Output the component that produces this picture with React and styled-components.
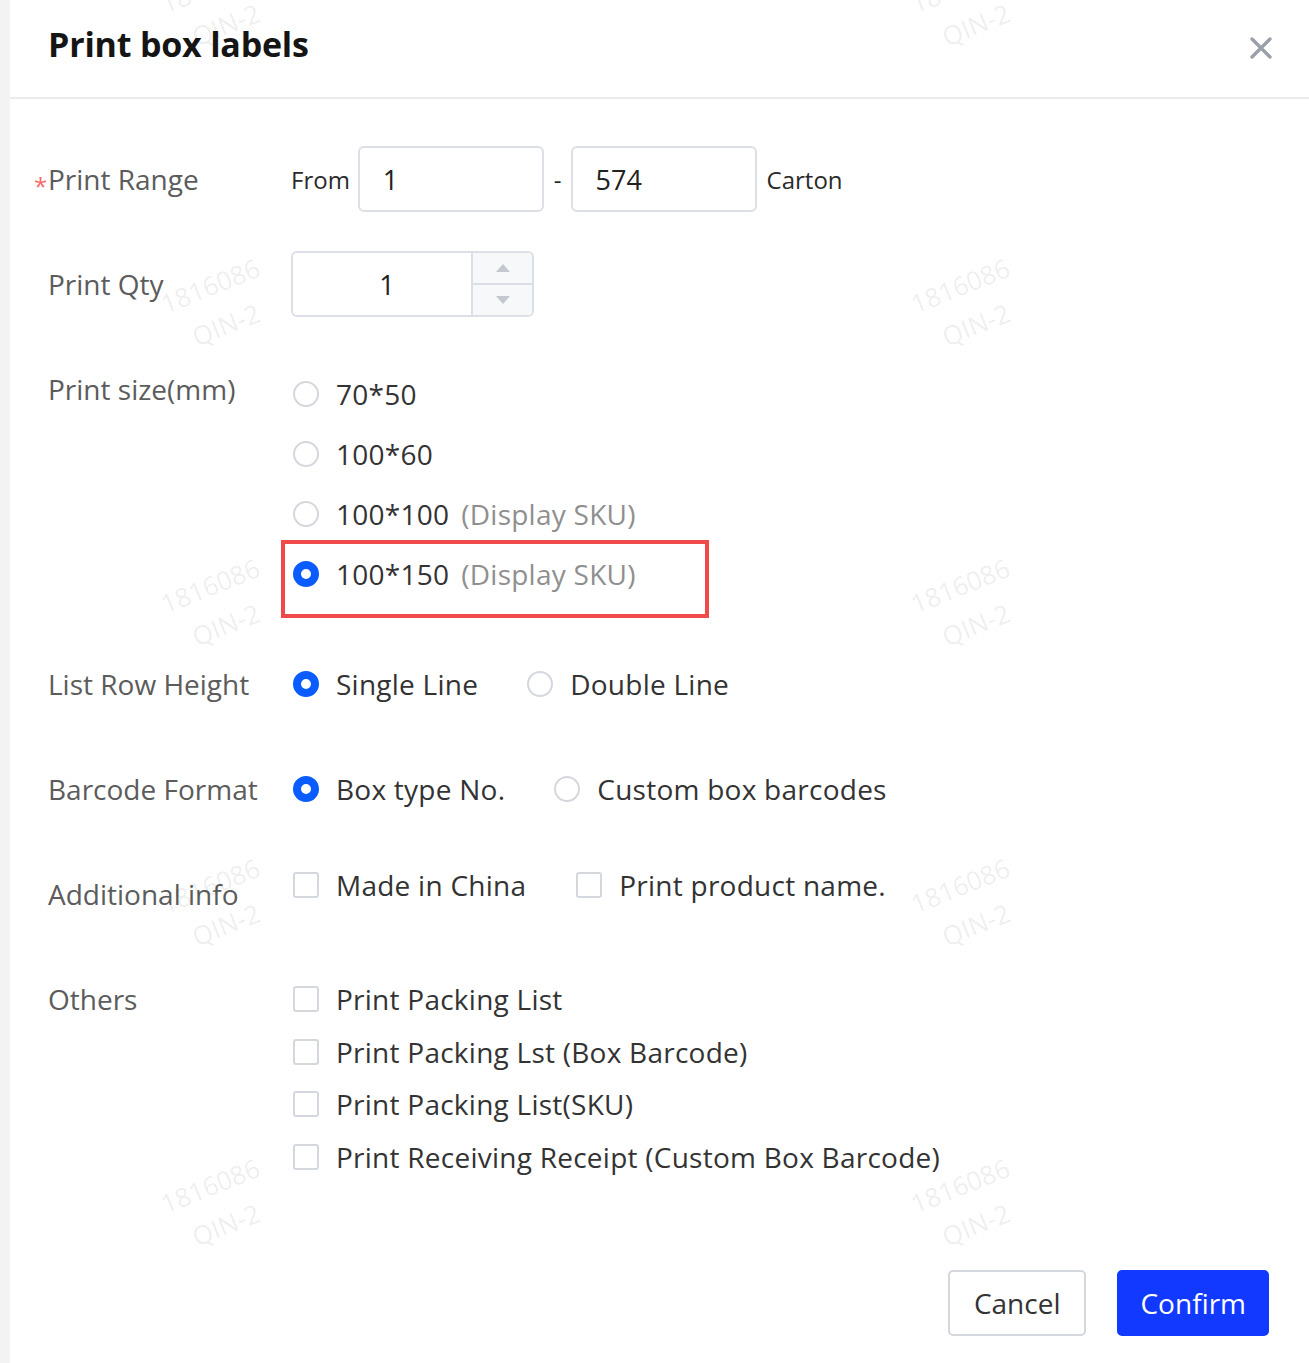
import React from 'react';
import styled, { createGlobalStyle } from 'styled-components';

const GlobalStyle = createGlobalStyle`
  html, body {
    margin: 0;
    padding: 0;
    background: #f3f3f3;
  }
  * {
    box-sizing: border-box;
  }
`;

const Dialog = styled.div`
  position: relative;
  margin-left: 10px;
  min-height: 1363px;
  background: #ffffff;
  font-family: "Open Sans", "Noto Sans", "Liberation Sans", sans-serif;
  overflow: hidden;
`;

const Header = styled.div`
  height: 99px;
  display: flex;
  align-items: center;
  justify-content: space-between;
  padding: 0 36px 0 38px;
  border-bottom: 2px solid #ebebeb;
`;

const Title = styled.h2`
  margin: 0 0 10px;
  font-size: 34px;
  font-weight: 700;
  letter-spacing: -0.2px;
  color: #151515;
`;

const CloseButton = styled.button`
  border: none;
  background: none;
  padding: 0;
  margin-bottom: 2px;
  width: 24px;
  height: 24px;
  cursor: pointer;
  display: flex;
`;

const Body = styled.div`
  padding: 47px 0 0;
`;

const FormItem = styled.div`
  display: flex;
  align-items: ${(p) => p.$align || 'center'};
  min-height: 66px;
  margin-bottom: ${(p) => p.$gap || 39}px;
`;

const Label = styled.div`
  flex: 0 0 281px;
  height: 66px;
  padding-left: 38px;
  display: flex;
  align-items: center;
  align-self: flex-start;
  font-size: 28px;
  color: #5c5c5c;
  white-space: nowrap;
`;

const Star = styled.span`
  color: #f56c6c;
  font-size: 24px;
  line-height: 1;
  margin: 14px 0 0 -14px;
  width: 14px;
`;

const Control = styled.div`
  display: flex;
  flex-wrap: ${(p) => (p.$column ? 'nowrap' : 'wrap')};
  flex-direction: ${(p) => (p.$column ? 'column' : 'row')};
  align-items: ${(p) => (p.$column ? 'flex-start' : 'center')};
  align-self: ${(p) => p.$self || 'auto'};
  padding-top: ${(p) => p.$pt || 0}px;
`;

const SmallText = styled.span`
  font-size: 24px;
  color: #2a2a2a;
  margin: ${(p) => p.$m || '0'};
`;

const TextInput = styled.div`
  width: 186px;
  height: 66px;
  border: 2px solid #dcdfe6;
  border-radius: 6px;
  padding-left: 23px;
  display: flex;
  align-items: center;
  font-size: 27px;
  color: #222;
`;

const NumberBox = styled.div`
  width: 243px;
  height: 66px;
  border: 2px solid #dcdfe6;
  border-radius: 6px;
  display: flex;
  overflow: hidden;
`;

const NumberValue = styled.div`
  flex: 1;
  display: flex;
  align-items: center;
  justify-content: center;
  padding-left: 10px;
  font-size: 27px;
  color: #222;
`;

const Stepper = styled.div`
  width: 61px;
  border-left: 2px solid #dcdfe6;
  background: #f7f8fa;
  display: flex;
  flex-direction: column;
`;

const StepButton = styled.div`
  flex: 1;
  display: flex;
  align-items: center;
  justify-content: center;
  border-top: ${(p) => (p.$down ? '2px solid #dcdfe6' : 'none')};
`;

const Option = styled.label`
  position: relative;
  display: flex;
  align-items: center;
  height: ${(p) => p.$h || 60}px;
  margin-right: ${(p) => p.$mr || 0}px;
  font-size: 28px;
  letter-spacing: 0.25px;
  color: #333;
  white-space: nowrap;
  cursor: pointer;
`;

const Radio = styled.span`
  width: 26px;
  height: 26px;
  border-radius: 50%;
  margin-left: 2px;
  margin-right: 17px;
  flex-shrink: 0;
  border: ${(p) => (p.$checked ? '8px solid #0a5cff' : '2px solid #d4d7dd')};
  background: #fff;
`;

const Checkbox = styled.span`
  width: 26px;
  height: 26px;
  border-radius: 3px;
  margin-left: 2px;
  margin-right: 17px;
  flex-shrink: 0;
  border: 2px solid #d4d7dd;
  background: #fff;
`;

const Hint = styled.span`
  color: #8f8f8f;
  margin-left: 12px;
`;

const Highlight = styled.div`
  position: absolute;
  left: -10px;
  top: -4px;
  width: 428px;
  height: 78px;
  border: 4px solid #f04a4a;
  pointer-events: none;
`;

const Footer = styled.div`
  display: flex;
  justify-content: flex-end;
  gap: 31px;
  padding: 48px 40px 0 0;
`;

const Button = styled.button`
  height: 66px;
  padding: 0 ${(p) => (p.$primary ? 21 : 24)}px;
  border-radius: 5px;
  font-family: "Open Sans", "Noto Sans", "Liberation Sans", sans-serif;
  font-size: 28px;
  cursor: pointer;
  border: 2px solid ${(p) => (p.$primary ? '#1239ff' : '#d4d7dd')};
  background: ${(p) => (p.$primary ? '#1239ff' : '#fff')};
  color: ${(p) => (p.$primary ? '#fff' : '#333')};
`;

const WatermarkLayer = styled.div`
  position: absolute;
  inset: 0;
  pointer-events: none;
`;

const Watermark = styled.div`
  position: absolute;
  display: flex;
  flex-direction: column;
  align-items: center;
  transform: translate(-50%, -50%) rotate(-22deg);
  font-family: "Open Sans", "Noto Sans", "Liberation Sans", sans-serif;
  font-size: 26px;
  line-height: 42px;
  color: rgba(0, 0, 0, 0.085);
  white-space: nowrap;
`;

const CloseIcon = () => (
  <svg width="24" height="24" viewBox="0 0 24 24">
    <path d="M3 3L21 21M21 3L3 21" stroke="#9aa0aa" strokeWidth="3.4" strokeLinecap="round" />
  </svg>
);

const Caret = ({ down }) => (
  <svg width="16" height="10" viewBox="0 0 16 10">
    <path d={down ? 'M1 1h14L8 9z' : 'M1 9h14L8 1z'} fill="#c4c8cf" />
  </svg>
);

const marks = [];
[5, 305, 605, 905, 1205].forEach((y) => {
  [208, 958].forEach((x) => marks.push({ x, y }));
});

const sizes = [
  { value: '70*50' },
  { value: '100*60' },
  { value: '100*100', hint: '(Display SKU)' },
  { value: '100*150', hint: '(Display SKU)', checked: true },
];

const others = [
  'Print Packing List',
  'Print Packing Lst (Box Barcode)',
  'Print Packing List(SKU)',
  'Print Receiving Receipt (Custom Box Barcode)',
];

export default function App() {
  return (
    <>
      <GlobalStyle />
      <Dialog>
        <Header>
          <Title>Print box labels</Title>
          <CloseButton aria-label="close">
            <CloseIcon />
          </CloseButton>
        </Header>
        <Body>
          <FormItem>
            <Label><Star>*</Star>Print Range</Label>
            <Control>
              <SmallText $m="0 8px 0 0">From</SmallText>
              <TextInput>1</TextInput>
              <SmallText $m="0 9px 0 10px">-</SmallText>
              <TextInput>574</TextInput>
              <SmallText $m="0 0 0 10px">Carton</SmallText>
            </Control>
          </FormItem>

          <FormItem>
            <Label>Print Qty</Label>
            <Control>
              <NumberBox>
                <NumberValue>1</NumberValue>
                <Stepper>
                  <StepButton><Caret /></StepButton>
                  <StepButton $down><Caret down /></StepButton>
                </Stepper>
              </NumberBox>
            </Control>
          </FormItem>

          <FormItem $gap={47}>
            <Label>Print size(mm)</Label>
            <Control $column $pt={8}>
              {sizes.map((s) => (
                <Option key={s.value}>
                  <Radio $checked={s.checked} />
                  {s.value}
                  {s.hint && <Hint>{s.hint}</Hint>}
                  {s.checked && <Highlight />}
                </Option>
              ))}
            </Control>
          </FormItem>

          <FormItem>
            <Label>List Row Height</Label>
            <Control>
              <Option $h={66} $mr={47}><Radio $checked />Single Line</Option>
              <Option $h={66}><Radio />Double Line</Option>
            </Control>
          </FormItem>

          <FormItem>
            <Label>Barcode Format</Label>
            <Control>
              <Option $h={66} $mr={47}><Radio $checked />Box type No.</Option>
              <Option $h={66}><Radio />Custom box barcodes</Option>
            </Control>
          </FormItem>

          <FormItem $align="flex-start">
            <Label>Additional info</Label>
            <Control $self="flex-start">
              <Option $h={48} $mr={48}><Checkbox />Made in China</Option>
              <Option $h={48}><Checkbox />Print product name.</Option>
            </Control>
          </FormItem>

          <FormItem $align="flex-start" $gap={0}>
            <Label>Others</Label>
            <Control $column $pt={7}>
              {others.map((o) => (
                <Option key={o} $h={52.5}><Checkbox />{o}</Option>
              ))}
            </Control>
          </FormItem>
        </Body>

        <Footer>
          <Button>Cancel</Button>
          <Button $primary>Confirm</Button>
        </Footer>

        <WatermarkLayer>
          {marks.map((m, i) => (
            <Watermark key={i} style={{ left: m.x, top: m.y }}>
              <span>1816086</span>
              <span>QIN-2</span>
            </Watermark>
          ))}
        </WatermarkLayer>
      </Dialog>
    </>
  );
}
